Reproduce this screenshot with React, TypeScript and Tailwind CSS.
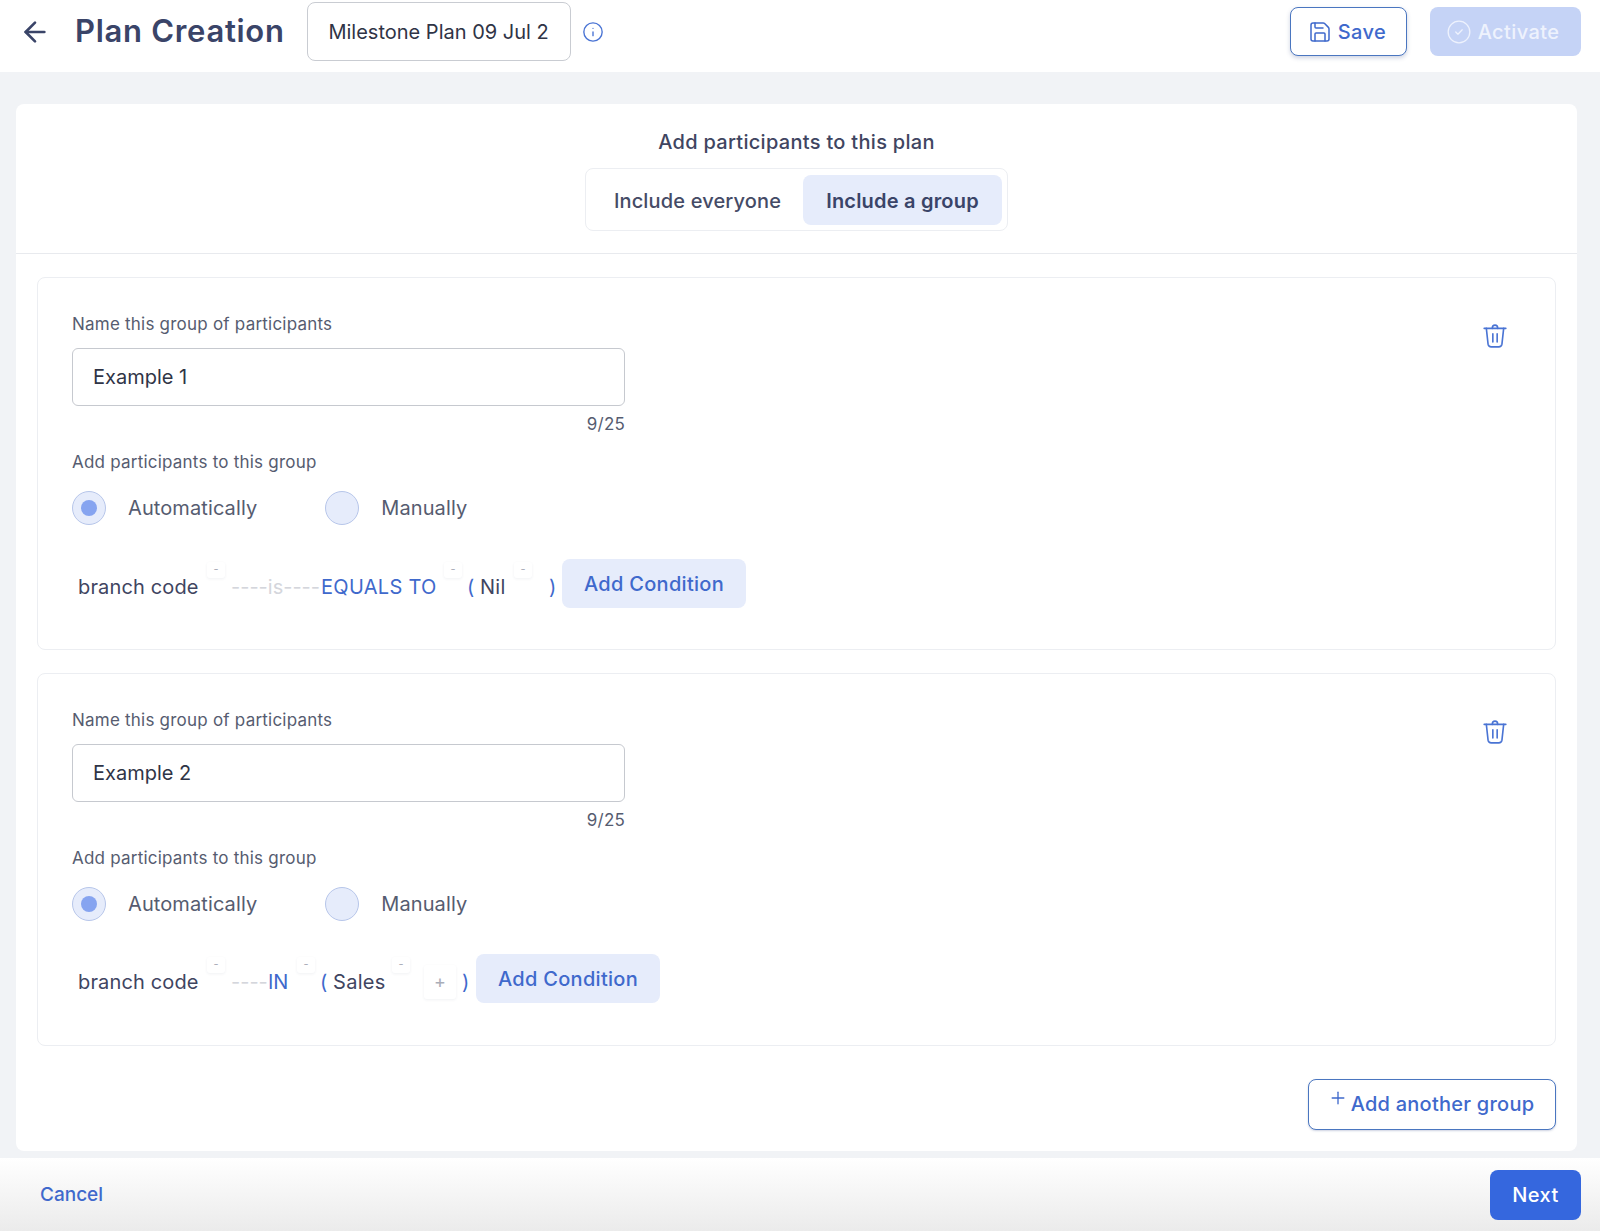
import { ArrowLeft, Info, Save, CircleCheck, Plus } from 'lucide-react';

function TrashIcon() {
  return (
    <svg width="26" height="26" viewBox="0 0 24 24" fill="none" stroke="#4a74d4" strokeWidth="1.5" strokeLinecap="round" strokeLinejoin="round">
      <path d="M2 5h20" />
      <path d="M9.5 5c0-4 5-4 5 0" />
      <path d="M4 5l1.6 14.5A3 3 0 0 0 8.6 22h6.8a3 3 0 0 0 3-2.5L20 5" />
      <path d="M10 10v7.5" />
      <path d="M14 10v7.5" />
    </svg>
  );
}

function Chip({ className, label = '-' }: { className: string; label?: string }) {
  return (
    <span className={`absolute flex items-start justify-center rounded-[3px] bg-white text-[11px] leading-[14px] text-[#a9adb8] shadow-[0_1px_3px_rgba(60,70,100,0.07)] ${className}`}>
      {label}
    </span>
  );
}

function Radio({ checked, label }: { checked?: boolean; label: string }) {
  return (
    <div className="flex items-center gap-[22px]">
      <span className="flex h-[34px] w-[34px] items-center justify-center rounded-full border border-[#b7c6ea] bg-[#e6ecfb]">
        {checked && <span className="h-[16px] w-[16px] rounded-full bg-[#86a4f0]" />}
      </span>
      <span className="text-[20px] tracking-[0.1px] text-[#565c70]">{label}</span>
    </div>
  );
}

function AddCondition() {
  return (
    <button className="flex h-[49px] w-[184px] items-center justify-center rounded-lg bg-[#e6ecfb] text-[20px] font-medium tracking-[0.3px] text-[#3f69cc]">
      Add Condition
    </button>
  );
}

function GroupCard({ name, children }: { name: string; children: React.ReactNode }) {
  return (
    <div className="relative h-[373px] rounded-lg border border-[#eceef2] bg-white pl-[34px] pt-[35px]">
      <button className="absolute right-[47px] top-[45px]">
        <TrashIcon />
      </button>
      <div className="text-[17px] leading-[22px] tracking-[0.22px] text-[#565c70]">Name this group of participants</div>
      <div className="mt-[13px] flex h-[58px] w-[553px] items-center rounded-md border border-[#c6c9cf] pl-[20px] text-[20px] text-[#2f3446]">
        {name}
      </div>
      <div className="mt-[8px] w-[553px] text-right text-[17px] leading-[20px] tracking-[0.2px] text-[#565c70]">9/25</div>
      <div className="mt-[17px] text-[17px] leading-[22px] tracking-[0.22px] text-[#565c70]">Add participants to this group</div>
      <div className="mt-[18px] flex items-center gap-[68px]">
        <Radio checked label="Automatically" />
        <Radio label="Manually" />
      </div>
      {children}
    </div>
  );
}

export default function App() {
  return (
    <div className="flex h-[1231px] w-[1600px] flex-col overflow-hidden bg-[#f1f3f6] font-['Inter',sans-serif]">
      <header className="flex h-[72px] shrink-0 items-center bg-white pb-[9px] pl-[19px] pr-[19px]">
        <ArrowLeft size={32} strokeWidth={2} className="text-[#3a4468]" />
        <h1 className="ml-[24px] text-[31px] font-semibold tracking-[0.7px] text-[#3a4468]">Plan Creation</h1>
        <div className="ml-[22px] flex h-[59px] w-[264px] items-center justify-center rounded-lg border border-[#c9ccd2] text-[20px] text-[#2f3446]">
          Milestone Plan 09 Jul 2
        </div>
        <Info size={22} strokeWidth={1.5} className="ml-[11px] text-[#4a74d4]" />
        <button className="ml-auto flex h-[49px] w-[117px] items-center justify-center gap-[6px] rounded-lg border border-[#4a76c0] bg-white pr-[3px] text-[20px] font-medium tracking-[0.4px] text-[#3f69cc] shadow-[0_2px_4px_rgba(60,80,140,0.25)]">
          <Save size={24} strokeWidth={1.5} />
          Save
        </button>
        <button className="ml-[23px] flex h-[49px] w-[151px] items-center justify-center gap-[6px] rounded-lg bg-[#c5d3f6] pr-[6px] text-[20px] font-medium tracking-[0.4px] text-[#eef2fd]">
          <CircleCheck size={26} strokeWidth={1.2} />
          Activate
        </button>
      </header>

      <main className="ml-[16px] mr-[23px] mt-[32px] h-[1047px] shrink-0 rounded-lg bg-white">
        <section className="flex h-[150px] flex-col items-center border-b border-[#e8eaee] pt-[25px]">
          <div className="text-[20px] font-medium leading-[26px] tracking-[0.3px] text-[#3f4561]">Add participants to this plan</div>
          <div className="mt-[13px] flex h-[63px] w-[423px] items-center justify-end rounded-lg border border-[#eceef2] pr-[5px]">
            <div className="flex h-[50px] flex-1 items-center justify-center pl-[6px] pt-[2px] text-[20px] font-medium tracking-[0.15px] text-[#454b66]">Include everyone</div>
            <div className="flex h-[50px] w-[199px] items-center justify-center rounded-lg bg-[#e6ecfb] pt-[2px] text-[20px] font-semibold tracking-[0.2px] text-[#3a4468]">Include a group</div>
          </div>
        </section>

        <div className="flex flex-col gap-[23px] px-[21px] pt-[23px]">
          <GroupCard name="Example 1">
            <div className="relative mt-[34px] flex h-[49px] w-fit items-center">
              <span className="ml-[6px] mt-[7px] w-[153px] text-[20px] tracking-[0.15px] text-[#3f4561]">branch code</span>
              <Chip className="left-[135px] top-[3px] h-[16px] w-[18px]" />
              <span className="mt-[7px] w-[90px] text-[20px] text-[#d4d6dc]">----is----</span>
              <span className="mt-[7px] w-[146px] text-[20px] tracking-[0.3px] text-[#3f69cc]">EQUALS TO</span>
              <Chip className="left-[372px] top-[3px] h-[16px] w-[18px]" />
              <span className="mt-[7px] w-[13px] text-[20px] text-[#3f69cc]">(</span>
              <span className="mt-[7px] w-[69px] text-[20px] tracking-[0.3px] text-[#3f4561]">Nil</span>
              <Chip className="left-[442px] top-[3px] h-[16px] w-[18px]" />
              <span className="mt-[7px] w-[13px] text-[20px] text-[#3f69cc]">)</span>
              <AddCondition />
            </div>
          </GroupCard>
          <GroupCard name="Example 2">
            <div className="relative mt-[33px] flex h-[49px] w-fit items-center">
              <span className="ml-[6px] mt-[7px] w-[153px] text-[20px] tracking-[0.15px] text-[#3f4561]">branch code</span>
              <Chip className="left-[135px] top-[3px] h-[16px] w-[18px]" />
              <span className="mt-[7px] w-[37px] text-[20px] text-[#d4d6dc]">----</span>
              <span className="mt-[7px] w-[52px] text-[20px] text-[#3f69cc]">IN</span>
              <Chip className="left-[225px] top-[3px] h-[16px] w-[18px]" />
              <span className="mt-[7px] w-[13px] text-[20px] text-[#3f69cc]">(</span>
              <span className="mt-[7px] w-[129px] text-[20px] tracking-[0.3px] text-[#3f4561]">Sales</span>
              <Chip className="left-[320px] top-[3px] h-[16px] w-[18px]" />
              <Chip className="left-[352px] top-[11px] h-[34px] w-[32px] !items-center !text-[18px]" label="+" />
              <span className="mt-[7px] w-[14px] text-[20px] text-[#3f69cc]">)</span>
              <AddCondition />
            </div>
          </GroupCard>
        </div>

        <div className="mt-[33px] flex justify-end pr-[21px]">
          <button className="flex h-[51px] w-[248px] items-center justify-center gap-[3px] rounded-lg border border-[#4a76c0] bg-white pb-[2px] pr-[2px] text-[20px] font-medium tracking-[0.25px] text-[#3f69cc] shadow-[0_1px_2px_rgba(60,80,140,0.25)]">
            <Plus size={20} strokeWidth={1.6} className="mb-[12px]" />
            Add another group
          </button>
        </div>
      </main>

      <footer className="mt-[7px] flex flex-1 items-center justify-between bg-gradient-to-b from-white to-[#ebebeb] pl-[40px] pr-[19px]">
        <span className="pt-[2px] text-[19px] font-medium text-[#3f69cc]">Cancel</span>
        <button className="flex h-[50px] w-[91px] items-center justify-center rounded-lg bg-[#3567de] text-[20px] font-medium tracking-[0.4px] text-white">
          Next
        </button>
      </footer>
    </div>
  );
}
